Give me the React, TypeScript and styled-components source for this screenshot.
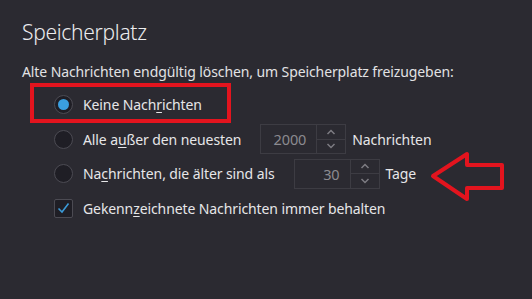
import styled, { createGlobalStyle } from "styled-components";

const GlobalStyle = createGlobalStyle`
  html, body {
    margin: 0;
    padding: 0;
    background: #2b2a31;
  }
  body {
    font-family: "Noto Sans", "Open Sans", sans-serif;
    color: #e6e6e8;
  }
`;

const Page = styled.div`
  position: relative;
  width: 532px;
  height: 299px;
  box-sizing: border-box;
  padding: 17px 22px 0;
  overflow: hidden;
`;

const Heading = styled.h1`
  margin: 0;
  font-size: 21px;
  font-weight: 300;
  letter-spacing: -0.3px;
  line-height: 30px;
  color: #ececee;
`;

const Description = styled.p`
  margin: 15px 0 0;
  font-size: 14px;
  letter-spacing: -0.1px;
  line-height: 20px;
  color: #e2e2e4;
`;

const Options = styled.div`
  display: flex;
  flex-direction: column;
  margin: 5px 0 0 32px;
`;

const Row = styled.label`
  display: flex;
  align-items: center;
  height: 34.7px;
  font-size: 14px;
  letter-spacing: -0.1px;
  color: #e6e6e8;
`;

const Radio = styled.span<{ $checked?: boolean }>`
  flex: none;
  width: 19px;
  height: 19px;
  box-sizing: border-box;
  border-radius: 50%;
  border: 1px solid #4c4b53;
  background: #1f1e25;
  display: grid;
  place-items: center;
  margin-right: 10px;

  &::after {
    content: "";
    width: 11px;
    height: 11px;
    border-radius: 50%;
    background: ${(p) => (p.$checked ? "#3a9fdf" : "transparent")};
  }
`;

const CheckBox = styled.span`
  flex: none;
  width: 19px;
  height: 19px;
  box-sizing: border-box;
  border-radius: 2px;
  border: 1px solid #4c4b53;
  background: #1f1e25;
  display: grid;
  place-items: center;
  margin-right: 10px;
`;

const Key = styled.span`
  text-decoration: underline;
  text-underline-offset: 2px;
`;

const Spinner = styled.div<{ $width: number }>`
  display: flex;
  width: ${(p) => p.$width}px;
  height: 30px;
  box-sizing: border-box;
  border: 1px solid #3d3c43;
  margin: 0 6px 0 19px;
`;

const SpinValue = styled.span`
  flex: 1;
  text-align: right;
  padding-right: 10px;
  line-height: 28px;
  font-size: 14.5px;
  color: #8b8a90;
`;

const SpinButtons = styled.div`
  display: flex;
  flex-direction: column;
  width: 28px;
  border-left: 1px solid #3d3c43;
`;

const SpinButton = styled.span`
  flex: 1;
  display: grid;
  place-items: center;
  & + & {
    border-top: 1px solid #3d3c43;
  }
`;

const Highlight = styled.div`
  position: absolute;
  left: 30px;
  top: 83px;
  width: 201px;
  height: 40px;
  box-sizing: border-box;
  border: 4px solid #e3141e;
  pointer-events: none;
`;

const Arrow = styled.svg`
  position: absolute;
  left: 428px;
  top: 150px;
`;

const Chevron = ({ up }: { up?: boolean }) => (
  <svg width="10" height="6" viewBox="0 0 10 6">
    <path
      d={up ? "M1.5 5 L5 1.5 L8.5 5" : "M1.5 1 L5 4.5 L8.5 1"}
      fill="none"
      stroke="#7d7c82"
      strokeWidth="1.5"
    />
  </svg>
);

const NumberSpinner = ({ value, width }: { value: string; width: number }) => (
  <Spinner $width={width}>
    <SpinValue>{value}</SpinValue>
    <SpinButtons>
      <SpinButton>
        <Chevron up />
      </SpinButton>
      <SpinButton>
        <Chevron />
      </SpinButton>
    </SpinButtons>
  </Spinner>
);

export default function App() {
  return (
    <Page>
      <GlobalStyle />
      <Heading>Speicherplatz</Heading>
      <Description>
        Alte Nachrichten endgültig löschen, um Speicherplatz freizugeben:
      </Description>
      <Options>
        <Row>
          <Radio $checked />
          <span>
            Keine Nach<Key>r</Key>ichten
          </span>
        </Row>
        <Row>
          <Radio />
          <span>
            Alle a<Key>u</Key>ßer den neuesten
          </span>
          <NumberSpinner value="2000" width={86} />
          <span>Nachrichten</span>
        </Row>
        <Row>
          <Radio />
          <span>
            Na<Key>c</Key>hrichten, die älter sind als
          </span>
          <NumberSpinner value="30" width={86} />
          <span>Tage</span>
        </Row>
        <Row>
          <CheckBox>
            <svg width="13" height="12" viewBox="0 0 13 12">
              <path
                d="M1.5 6.5 L5 10 L11.5 1.5"
                fill="none"
                stroke="#3b9ad8"
                strokeWidth="1.6"
              />
            </svg>
          </CheckBox>
          <span>
            Gekenn<Key>z</Key>eichnete Nachrichten immer behalten
          </span>
        </Row>
      </Options>
      <Highlight />
      <Arrow width="80" height="54" viewBox="0 0 80 54">
        <path
          d="M5 26 L39 4 L39 15 L74 15 L74 38 L39 38 L39 49 Z"
          fill="none"
          stroke="#e3141e"
          strokeWidth="4"
          strokeLinejoin="round"
        />
      </Arrow>
    </Page>
  );
}
